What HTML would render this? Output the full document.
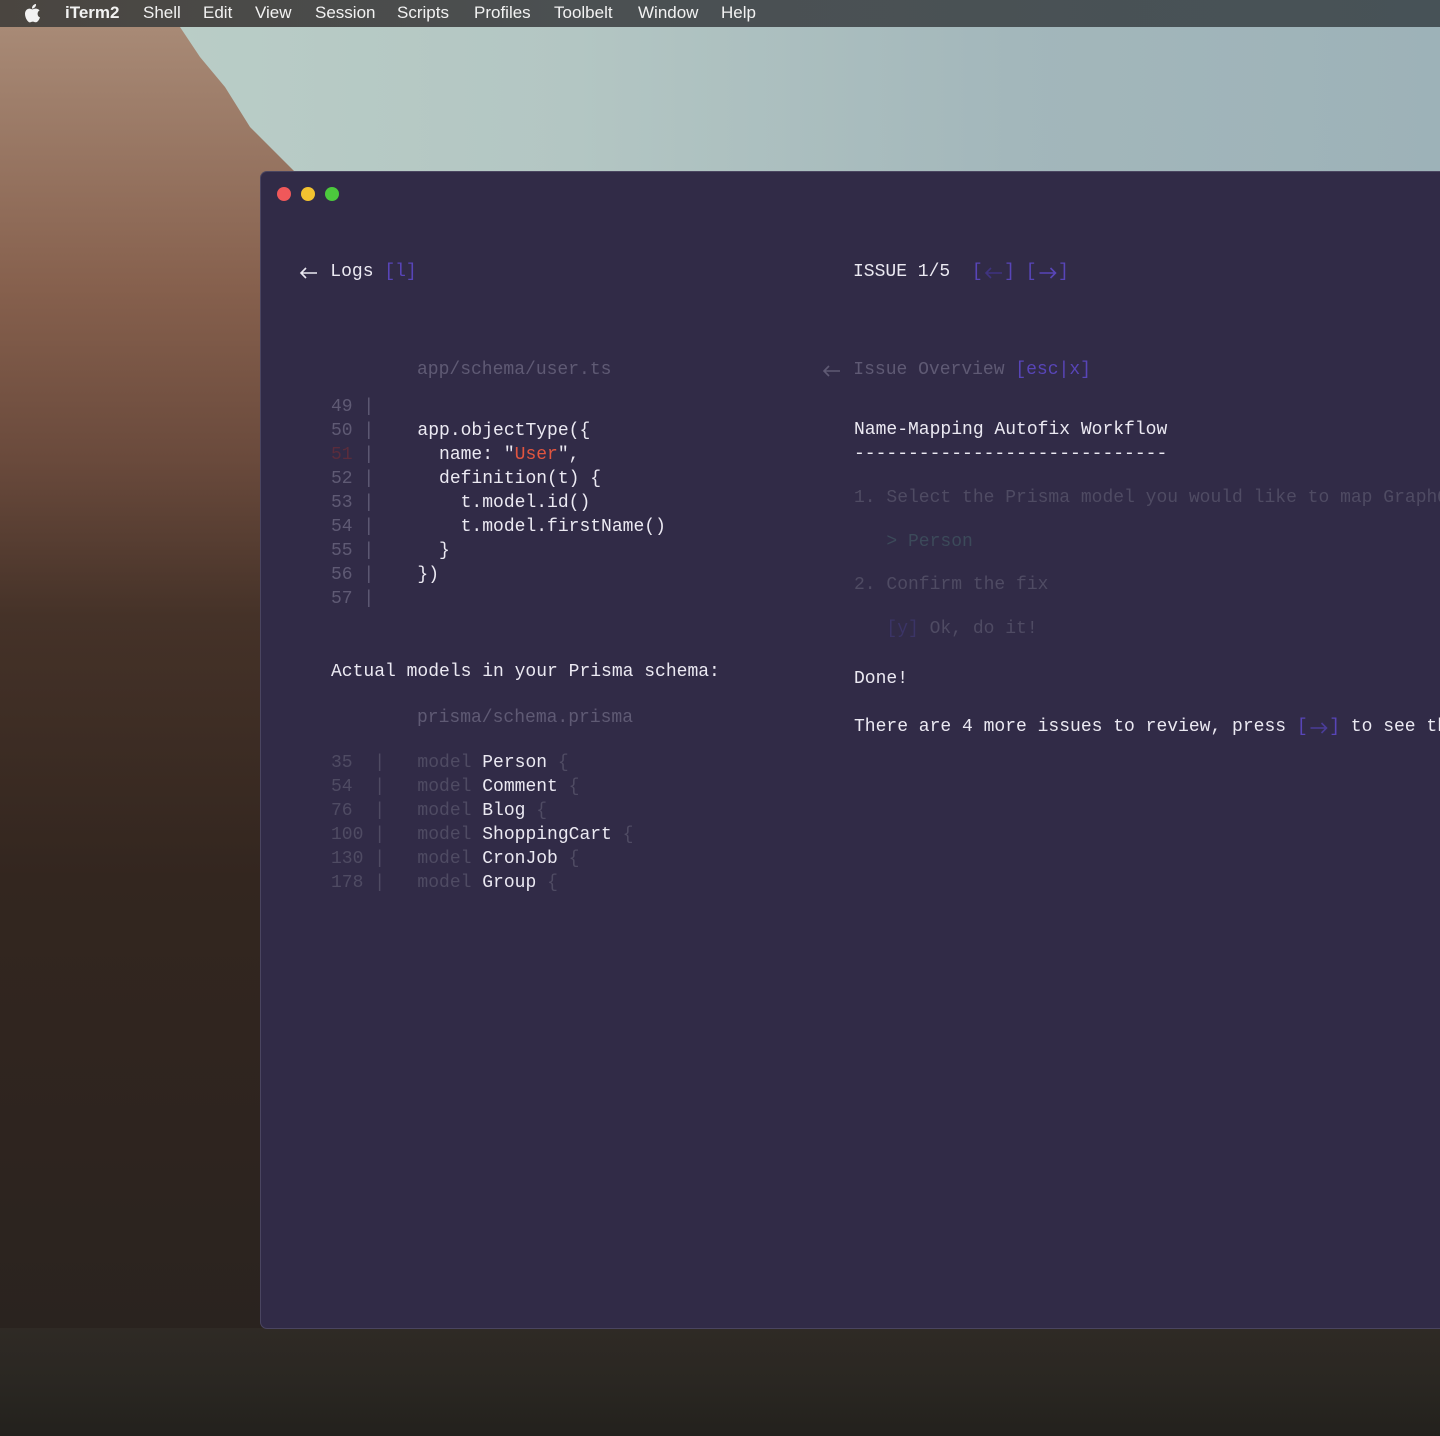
<!DOCTYPE html>
<html><head><meta charset="utf-8">
<style>
html,body{margin:0;padding:0;}
body{width:1440px;height:1436px;position:relative;overflow:hidden;
background:linear-gradient(180deg,#b9ccc6 0px,#adc2c0 150px,#8fa09c 300px,#3b3430 1330px,#2a2622 1436px);
font-family:"Liberation Mono",monospace;}
.sky{position:absolute;left:0;top:27px;width:1440px;height:150px;background:linear-gradient(90deg,#bcd0c8 0%,#b3c6c3 40%,#a3b7bb 70%,#9db2b8 100%);}
.menubar{position:absolute;left:0;top:0;width:1440px;height:27px;background:linear-gradient(90deg,#4a4540 0%,#4b5052 40%,#475257 100%);color:#f2f2f2;font-family:"Liberation Sans",sans-serif;font-size:17px;}
.menubar span{position:absolute;top:3px;}
.ground{position:absolute;left:0;top:1328px;width:1440px;height:108px;background:linear-gradient(180deg,#2f2a25,#2a2722 50%,#23211d);}
.win{position:absolute;left:261px;top:172px;width:1190px;height:1156px;background:#312b47;border-radius:6px 0 0 6px;box-shadow:0 0 0 1px #4a4560;}
.dot{position:absolute;top:187px;width:14px;height:14px;border-radius:50%;}
.t{position:absolute;font-size:18px;line-height:24px;white-space:pre;color:#ebe9f2;}
.ar{display:inline-block;width:21.5px;height:24px;vertical-align:top;}
.g{color:#5f5a74}
.d{color:#4f4b63}
.p{color:#5845b8}
.r{color:#e2553f}
</style></head><body>
<div class="sky"></div>
<svg style="position:absolute;left:0;top:27px" width="320" height="1310">
<defs><linearGradient id="c" x1="0" y1="0" x2="0" y2="1">
<stop offset="0" stop-color="#a88a76"/><stop offset="0.2" stop-color="#86604d"/><stop offset="0.33" stop-color="#6a4a3c"/><stop offset="0.45" stop-color="#453228"/><stop offset="0.65" stop-color="#33261f"/><stop offset="1" stop-color="#2a231f"/></linearGradient></defs>
<path d="M0 0 L180 0 L200 30 L225 60 L250 100 L280 130 L300 150 L320 160 L320 1310 L0 1310 Z" fill="url(#c)"/>
</svg>
<div class="ground"></div>
<div class="menubar">
<svg style="position:absolute;left:25px;top:4px" width="16" height="19" viewBox="0 0 16 19"><path fill="#f2f2f2" d="M11 0c.2 1.3-.4 2.5-1.1 3.3-.8.9-1.9 1.4-2.9 1.3-.2-1.2.4-2.4 1.1-3.2C8.8.6 10 .1 11 0zM14.6 6.4c-.2.1-2 1.2-2 3.5 0 2.7 2.4 3.6 2.4 3.6s-.4 1.3-1.3 2.6c-.8 1.1-1.6 2.2-2.9 2.2s-1.6-.7-3-.7-1.9.8-3 .8-2-1.2-2.8-2.3C.8 14.4 0 12.1 0 9.9c0-3.5 2.3-5.3 4.5-5.3 1.2 0 2.2.8 2.9.8.7 0 1.8-.8 3.2-.8.5 0 2.5.1 4 1.8z"/></svg>
<span style="left:65px;font-weight:bold">iTerm2</span>
<span style="left:143px">Shell</span>
<span style="left:203px">Edit</span>
<span style="left:255px">View</span>
<span style="left:315px">Session</span>
<span style="left:397px">Scripts</span>
<span style="left:474px">Profiles</span>
<span style="left:554px">Toolbelt</span>
<span style="left:638px">Window</span>
<span style="left:721px">Help</span>
</div>
<div class="win"></div>
<div class="dot" style="left:277px;background:#f0585a"></div>
<div class="dot" style="left:301px;background:#f2c230"></div>
<div class="dot" style="left:325px;background:#4cc93d"></div>

<div class="t" style="left:298px;top:260px"><svg class="ar" viewBox="0 0 21.5 24"><path d="M19 13H3M8 8L3 13L8 18" stroke="#ebe9f2" stroke-width="1.6" fill="none"/></svg> Logs <span class="p">[l]</span></div>
<div class="t" style="left:853px;top:260px">ISSUE 1/5  <span class="p">[<svg class="ar" viewBox="0 0 21.5 24"><path d="M19 13H3M8 8L3 13L8 18" stroke="#3f3380" stroke-width="1.6" fill="none"/></svg>] [<svg class="ar" viewBox="0 0 21.5 24"><path d="M2.5 13H18.5M13.5 8L18.5 13L13.5 18" stroke="#5845b8" stroke-width="1.6" fill="none"/></svg>]</span></div>

<div class="t g" style="left:417px;top:358px">app/schema/user.ts</div>
<div class="t" style="left:331px;top:395px"><span class="g">49 |</span>
<span class="g">50 |</span>    app.objectType({
<span style="color:#5a2c3c">51</span><span class="g"> |</span>      name: "<span class="r">User</span>",
<span class="g">52 |</span>      definition(t) {
<span class="g">53 |</span>        t.model.id()
<span class="g">54 |</span>        t.model.firstName()
<span class="g">55 |</span>      }
<span class="g">56 |</span>    })
<span class="g">57 |</span></div>

<div class="t" style="left:331px;top:660px">Actual models in your Prisma schema:</div>
<div class="t g" style="left:417px;top:706px">prisma/schema.prisma</div>
<div class="t" style="left:331px;top:751px"><span class="d">35  |   model</span> Person <span class="d">{</span>
<span class="d">54  |   model</span> Comment <span class="d">{</span>
<span class="d">76  |   model</span> Blog <span class="d">{</span>
<span class="d">100 |   model</span> ShoppingCart <span class="d">{</span>
<span class="d">130 |   model</span> CronJob <span class="d">{</span>
<span class="d">178 |   model</span> Group <span class="d">{</span></div>

<div class="t g" style="left:821px;top:358px"><svg class="ar" viewBox="0 0 21.5 24"><path d="M19 13H3M8 8L3 13L8 18" stroke="#5f5a74" stroke-width="1.6" fill="none"/></svg> Issue Overview <span class="p">[esc|x]</span></div>
<div class="t" style="left:854px;top:418px">Name-Mapping Autofix Workflow
-----------------------------</div>
<div class="t d" style="left:854px;top:486px">1. Select the Prisma model you would like to map GraphQL</div>
<div class="t" style="left:854px;top:530px;color:#3c4a5a">   &gt; Person</div>
<div class="t d" style="left:854px;top:573px">2. Confirm the fix</div>
<div class="t d" style="left:854px;top:617px">   <span style="color:#3b3466">[y]</span> Ok, do it!</div>
<div class="t" style="left:854px;top:667px">Done!</div>
<div class="t" style="left:854px;top:715px">There are 4 more issues to review, press <span class="p">[<svg class="ar" viewBox="0 0 21.5 24"><path d="M2.5 13H18.5M13.5 8L18.5 13L13.5 18" stroke="#4a3c98" stroke-width="1.6" fill="none"/></svg>]</span> to see the</div>
</body></html>
